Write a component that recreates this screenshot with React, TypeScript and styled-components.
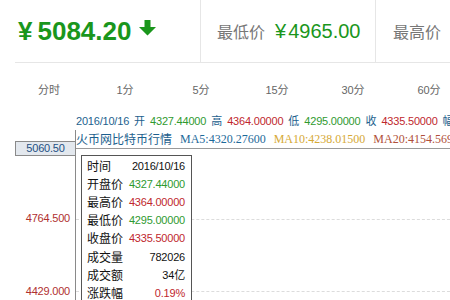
import { FC } from "react";
import styled, { createGlobalStyle } from "styled-components";

const GlobalStyle = createGlobalStyle`
  html, body {
    margin: 0;
    padding: 0;
    background: #fff;
  }
  body {
    font-family: "Liberation Sans", "Noto Sans CJK SC", sans-serif;
    width: 450px;
    height: 300px;
    overflow: hidden;
  }
`;

const GREEN = "#1a961c";
const UP = "#c0272d";
const DOWN = "#2f9a2f";
const TEAL = "#1c5f8e";

const Page = styled.div`
  width: 450px;
  height: 300px;
  overflow: hidden;
  display: flex;
  flex-direction: column;
`;

const Header = styled.div`
  display: flex;
  height: 62px;
  margin-left: 15px;
  border-bottom: 1px solid #e6e6e6;
`;

const Cell = styled.div<{ $w?: number }>`
  display: flex;
  align-items: center;
  flex: ${(p) => (p.$w ? `0 0 ${p.$w}px` : "1")};
  border-right: ${(p) => (p.$w ? "1px solid #e6e6e6" : "none")};
  padding-left: ${(p) => (p.$w === 186 ? 3 : p.$w ? 16 : 17)}px;
  box-sizing: border-box;
  white-space: nowrap;
  overflow: hidden;
`;

const BigPrice = styled.span`
  color: ${GREEN};
  font-size: 26px;
  font-weight: bold;
  margin-top: 1px;
`;

const Yen = styled.span<{ $gap: number }>`
  margin-right: ${(p) => p.$gap}px;
`;

const Arrow = styled.svg`
  margin-left: 8px;
  margin-top: -6px;
`;

const StatLabel = styled.span`
  color: #777;
  font-family: "Noto Sans CJK SC", sans-serif;
  font-size: 16px;
  margin-right: 10px;
`;

const StatValue = styled.span`
  color: ${GREEN};
  font-size: 20px;
`;

const Tabs = styled.div`
  display: grid;
  grid-template-columns: repeat(6, 76px);
  padding-left: 11px;
  height: 47px;
  align-items: center;
  padding-top: 5px;
  box-sizing: border-box;
`;

const Tab = styled.span`
  text-align: center;
  color: #666;
  font-size: 11px;
  font-family: "Liberation Sans", "Noto Sans CJK SC", sans-serif;
`;

const InfoLine = styled.div`
  display: flex;
  gap: 5px;
  margin: 3px 0 0 76px;
  height: 15px;
  align-items: center;
  white-space: nowrap;
`;

const Num = styled.span<{ $c?: string }>`
  color: ${(p) => p.$c || "#111"};
  font-size: 11px;
  letter-spacing: -0.2px;
  font-family: "Liberation Sans", sans-serif;
`;

const Cjk = styled.span<{ $c?: string; $s?: number }>`
  color: ${(p) => p.$c || "#111"};
  font-size: ${(p) => p.$s || 11}px;
  font-family: "Noto Sans CJK SC", sans-serif;
  line-height: 1;
`;

const Chart = styled.div`
  display: flex;
  flex: 1;
  margin-top: 2px;
`;

const Axis = styled.div`
  position: relative;
  flex: 0 0 75px;
`;

const AxisLabel = styled.span<{ $top: number }>`
  position: absolute;
  right: 5px;
  top: ${(p) => p.$top}px;
  color: #b0302f;
  font-size: 11px;
  letter-spacing: -0.2px;
`;

const CrossLabel = styled.div`
  position: absolute;
  left: 15px;
  right: 0;
  top: 11px;
  height: 13px;
  border: 1px solid #8a8a8a;
  border-right: none;
  background: #e3e8ee;
  color: #1e4f82;
  font-size: 11px;
  letter-spacing: -0.2px;
  text-align: center;
  line-height: 13px;
`;

const Plot = styled.div`
  position: relative;
  flex: 1;
  border-left: 1px solid #8a8a8a;
`;

const MaLine = styled.div`
  display: flex;
  gap: 8px;
  height: 19px;
  align-items: center;
  white-space: nowrap;
  border-bottom: 1px solid #9a9a9a;
  box-sizing: border-box;
`;

const Ma = styled.span<{ $c: string }>`
  color: ${(p) => p.$c};
  font-family: "Liberation Serif", serif;
  font-size: 12px;
`;

const GridLine = styled.div<{ $top: number }>`
  position: absolute;
  left: 0;
  right: 0;
  top: ${(p) => p.$top}px;
  border-top: 1px dashed #dcdcdc;
`;

const Tooltip = styled.div`
  position: absolute;
  left: 5px;
  top: 25px;
  width: 111px;
  height: 160px;
  box-sizing: border-box;
  border: 1px solid #555;
  background: #fff;
  padding: 1px 6px 0 5px;
`;

const TipRow = styled.div`
  display: flex;
  justify-content: space-between;
  align-items: center;
  height: 18.1px;
`;

const arrow = (
  <Arrow width="17" height="16" viewBox="0 0 17 16">
    <path d="M5.5 0H11.5V7H17L8.5 15.5L0 7H5.5Z" fill={GREEN} />
  </Arrow>
);

const tabs = ["分时", "1分", "5分", "15分", "30分", "60分"];

const tip: [string, string, string?][] = [
  ["时间", "2016/10/16"],
  ["开盘价", "4327.44000", DOWN],
  ["最高价", "4364.00000", UP],
  ["最低价", "4295.00000", DOWN],
  ["收盘价", "4335.50000", UP],
  ["成交量", "782026"],
  ["成交额", "34亿"],
  ["涨跌幅", "0.19%", UP],
];

const App: FC = () => {
  return (
    <Page>
      <GlobalStyle />
      <Header>
        <Cell $w={186}>
          <BigPrice>
            <Yen $gap={5}>¥</Yen>5084.20
          </BigPrice>
          {arrow}
        </Cell>
        <Cell $w={175}>
          <StatLabel>最低价</StatLabel>
          <StatValue>
            <Yen $gap={2}>¥</Yen>4965.00
          </StatValue>
        </Cell>
        <Cell>
          <StatLabel>最高价</StatLabel>
          <StatValue>
            <Yen $gap={2}>¥</Yen>5100.00
          </StatValue>
        </Cell>
      </Header>

      <Tabs>
        {tabs.map((t) => (
          <Tab key={t}>{t}</Tab>
        ))}
      </Tabs>

      <InfoLine>
        <Num $c={TEAL}>2016/10/16</Num>
        <Cjk $c={TEAL}>开</Cjk>
        <Num $c={DOWN}>4327.44000</Num>
        <Cjk $c={TEAL}>高</Cjk>
        <Num $c={UP}>4364.00000</Num>
        <Cjk $c={TEAL}>低</Cjk>
        <Num $c={DOWN}>4295.00000</Num>
        <Cjk $c={TEAL}>收</Cjk>
        <Num $c={UP}>4335.50000</Num>
        <Cjk $c={TEAL}>幅</Cjk>
      </InfoLine>

      <Chart>
        <Axis>
          <CrossLabel>5060.50</CrossLabel>
          <AxisLabel $top={82}>4764.500</AxisLabel>
          <AxisLabel $top={155}>4429.000</AxisLabel>
        </Axis>
        <Plot>
          <MaLine>
            <Cjk $c={TEAL} $s={12}>火币网比特币行情</Cjk>
            <Ma $c="#1d6a9a">MA5:4320.27600</Ma>
            <Ma $c="#d6a935">MA10:4238.01500</Ma>
            <Ma $c="#b0503a">MA20:4154.56900</Ma>
          </MaLine>
          <GridLine $top={89} />
          <GridLine $top={161} />
          <Tooltip>
            {tip.map(([label, value, color]) => (
              <TipRow key={label}>
                <Cjk $s={12}>{label}</Cjk>
                {value.endsWith("亿") ? (
                  <Num>
                    34<Cjk $s={11}>亿</Cjk>
                  </Num>
                ) : (
                  <Num $c={color}>{value}</Num>
                )}
              </TipRow>
            ))}
          </Tooltip>
        </Plot>
      </Chart>
    </Page>
  );
};

export default App;
